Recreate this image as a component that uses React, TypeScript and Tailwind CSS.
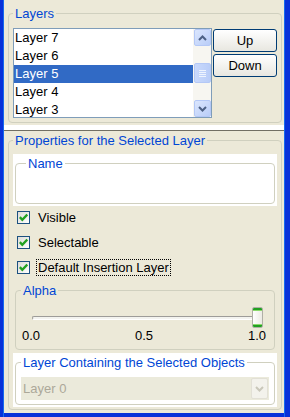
import React from "react";

const font = { fontFamily: '"Liberation Sans", Arial, sans-serif' };

function ScrollArrow({ up }: { up?: boolean }) {
  return (
    <div className="h-[17px] w-[17px] rounded-[2px] border border-[#b4c8f6] bg-gradient-to-br from-[#dbe6fd] to-[#b9cdf8] flex items-center justify-center">
      <svg width="9" height="6" viewBox="0 0 9 6">
        <polyline
          points={up ? "1,5 4.5,1.5 8,5" : "1,1 4.5,4.5 8,1"}
          fill="none"
          stroke="#4d6185"
          strokeWidth="2"
        />
      </svg>
    </div>
  );
}

function Check({ label, focus }: { label: string; focus?: boolean }) {
  return (
    <div className="flex items-center h-[13px] ml-[4px]">
      <div className="w-[13px] h-[13px] border border-[#1c5180] bg-gradient-to-br from-[#dcdcd7] to-white flex items-center justify-center">
        <svg width="9" height="9" viewBox="0 0 9 9">
          <polyline points="0.8,4.2 3.3,6.8 8.3,1.6" fill="none" stroke="#21a121" strokeWidth="2.4" />
        </svg>
      </div>
      <span
        className={
          "ml-[6px] px-[1px] leading-[15px] text-[13px] text-black border border-dotted " +
          (focus ? "border-black" : "border-transparent")
        }
      >
        {label}
      </span>
    </div>
  );
}

function XpButton({ children }: { children: React.ReactNode }) {
  return (
    <div className="h-[23px] w-[64px] rounded-[3px] border border-[#003c74] bg-gradient-to-b from-white to-[#e8e7e0] flex items-center justify-center text-[13px] text-black">
      {children}
    </div>
  );
}

export default function App() {
  const layers = ["Layer 7", "Layer 6", "Layer 5", "Layer 4", "Layer 3"];
  return (
    <div className="w-[290px] h-[417px] flex bg-[#ece9d8]" style={font}>
      <div className="w-[3px] bg-[#0831d9]" />
      <div className="w-[1px] bg-[#166aee]" />
      <div className="flex-1 flex flex-col">
        {/* top: layers list */}
        <div className="pt-[6px] pb-[2px]">
          <fieldset className="ml-[4px] mr-[2px] border border-[#d0d0bf] rounded-[4px] pl-[4px] pr-[4px] pt-[7px] pb-[4px]">
            <legend className="px-[2px] leading-[15px] text-[13px] text-[#0046d5]">Layers</legend>
            <div className="flex items-start gap-[1px]">
              <div className="w-[199px] h-[90px] border border-[#7f9db9] bg-white flex">
                <div className="flex-1 overflow-hidden">
                  {layers.map((l, i) => (
                    <div
                      key={l}
                      className={
                        "h-[18px] leading-[18px] pl-[1px] text-[13px] " +
                        (i === 2 ? "bg-[#316ac5] text-white" : "text-black")
                      }
                    >
                      {l}
                    </div>
                  ))}
                </div>
                <div className="w-[18px] bg-[#f7f6f1] flex flex-col justify-between pl-[1px]">
                  <ScrollArrow up />
                  <div className="h-[20px] w-[17px] rounded-[2px] border border-[#b4c8f6] bg-gradient-to-r from-[#c9d9fc] to-[#b9cdf8] flex flex-col items-center justify-center gap-[1px]">
                    <div className="w-[7px] h-[1px] bg-[#eef4fe]" />
                    <div className="w-[7px] h-[1px] bg-[#eef4fe]" />
                    <div className="w-[7px] h-[1px] bg-[#eef4fe]" />
                    <div className="w-[7px] h-[1px] bg-[#eef4fe]" />
                  </div>
                  <ScrollArrow />
                </div>
              </div>
              <div className="mt-[1px] flex flex-col gap-[2px]">
                <XpButton>Up</XpButton>
                <XpButton>Down</XpButton>
              </div>
            </div>
          </fieldset>
        </div>
        {/* splitter */}
        <div className="h-[5px] bg-white" />
        <div className="h-[1px] bg-[#716f64]" />
        {/* properties */}
        <div className="pt-[2px]">
          <fieldset className="ml-[4px] mr-[2px] border border-[#d0d0bf] rounded-[4px] pl-[4px] pr-[4px] pt-[6px] pb-[2px]">
            <legend className="px-[2px] leading-[15px] text-[13px] text-[#0046d5]">
              Properties for the Selected Layer
            </legend>
            <div className="bg-white p-[2px]">
              <fieldset className="h-[48px] border border-[#d0d0bf] rounded-[4px] pl-[10px]">
                <legend className="px-[2px] leading-[15px] text-[13px] text-[#0046d5]">Name</legend>
              </fieldset>
            </div>
            <div className="mt-[5px] flex flex-col gap-[12px]">
              <Check label="Visible" />
              <Check label="Selectable" />
              <Check label="Default Insertion Layer" focus />
            </div>
            <fieldset className="mt-[9px] mx-[2px] border border-[#d0d0bf] rounded-[4px] pl-[5px] pr-[5px] pt-[9px] pb-[6px]">
              <legend className="px-[2px] leading-[15px] text-[13px] text-[#0046d5]">Alpha</legend>
              <div className="relative ml-[11px] w-[231px] h-[21px] flex items-center">
                <div className="w-full h-[4px] rounded-[2px] border-t border-l border-[#9d9c99] border-b border-r border-b-white border-r-white bg-[#f3f3ef]" />
                <div className="absolute right-0 top-0 w-[11px] h-[21px] rounded-[2px] border border-[#b0afa6] bg-gradient-to-r from-white to-[#ecebe4] flex flex-col justify-between overflow-hidden">
                  <div className="h-[3px] bg-[#21a121] border-b border-[#8bd86c]" />
                  <div className="h-[3px] bg-[#21a121] border-t border-[#8bd86c]" />
                </div>
              </div>
              <div className="ml-[1px] w-[244px] flex justify-between leading-[15px] text-[13px] text-black">
                <span>0.0</span>
                <span>0.5</span>
                <span>1.0</span>
              </div>
            </fieldset>
            <div className="mt-[3px] bg-white p-[2px]">
              <fieldset className="border border-[#d0d0bf] rounded-[4px] pl-[5px] pt-[7px] pb-[4px]">
                <legend className="px-[2px] leading-[15px] text-[13px] text-[#0046d5]">
                  Layer Containing the Selected Objects
                </legend>
                <div className="w-[248px] h-[23px] bg-[#ebeadb] flex items-center justify-between">
                  <span className="pl-[2px] text-[13px] text-[#aca899]">Layer 0</span>
                  <div className="mr-[1px] w-[17px] h-[21px] rounded-[2px] border border-[#e2e0d6] bg-[#f3f2ec] flex items-center justify-center">
                    <svg width="9" height="6" viewBox="0 0 9 6">
                      <polyline points="1,1 4.5,4.5 8,1" fill="none" stroke="#c9c7ba" strokeWidth="2" />
                    </svg>
                  </div>
                </div>
              </fieldset>
            </div>
          </fieldset>
        </div>
        <div className="flex-1" />
        <div className="h-[4px] bg-[#0831d9]" />
      </div>
      <div className="w-[1px] bg-[#166aee]" />
      <div className="w-[5px] bg-[#0831d9]" />
    </div>
  );
}
